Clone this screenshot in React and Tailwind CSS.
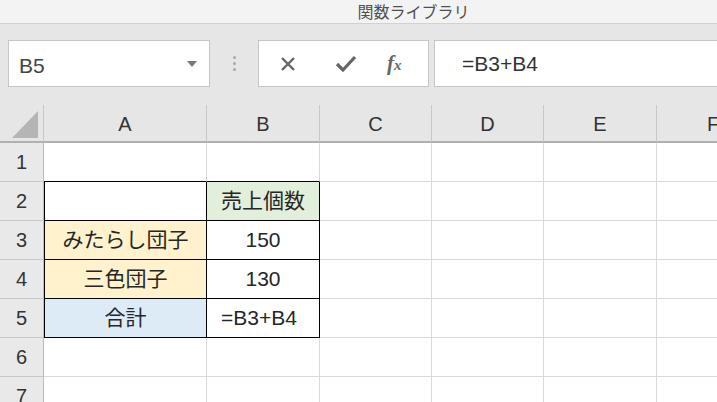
import React from 'react';

const cols = ['A', 'B', 'C', 'D', 'E', 'F'];
const rows = [1, 2, 3, 4, 5, 6, 7];

// セルの内容と装飾 (A2:B5 が表)
const cells = {
    'A2': { table: true },
    'B2': { text: '売上個数', bg: 'bg-[#e2efda]', table: true },
    'A3': { text: 'みたらし団子', bg: 'bg-[#fff2cc]', table: true },
    'B3': { text: '150', table: true },
    'A4': { text: '三色団子', bg: 'bg-[#fff2cc]', table: true },
    'B4': { text: '130', table: true },
    'A5': { text: '合計', bg: 'bg-[#ddebf7]', table: true },
    'B5': { text: '=B3+B4', table: true, left: true },
};

function Cell({ col, row }) {
    const key = `${col}${row}`;
    const c = cells[key] || {};
    // 表の上の行は下線を黒にする
    const aboveTable = row === 1 && (col === 'A' || col === 'B');
    const border = c.table
        ? 'border-r border-b border-black'
        : aboveTable
            ? 'border-r border-b border-r-[#dadada] border-b-black'
            : 'border-r border-b border-[#dadada]';
    const leftEdge = c.table && col === 'A' ? 'border-l border-l-black' : '';
    return (
        <div className={`flex items-center ${c.left ? 'justify-start pl-[14px]' : 'justify-center'} ${c.bg || 'bg-white'} ${border} ${leftEdge} text-[21px] text-[#262626] whitespace-nowrap overflow-hidden`}>
            {c.text}
        </div>
    );
}

export default function App() {
    return (
        <div className="w-[717px] h-[402px] overflow-hidden bg-[#e6e6e6] font-['Liberation_Sans','Noto_Sans_CJK_JP',sans-serif]">
            {/* リボン下部 */}
            <div className="h-[24px] bg-[#f3f3f3] border-b border-[#d2d2d2] flex justify-center items-start">
                <span className="ml-[110px] mt-[1px] text-[16px] leading-[20px] text-[#505050] font-['Noto_Sans_CJK_JP',sans-serif]">関数ライブラリ</span>
            </div>

            {/* 数式バー */}
            <div className="h-[81px] flex items-start pt-[16px] pl-[8px]">
                <div className="w-[202px] h-[47px] bg-white border border-[#c6c6c6] flex items-center justify-between pl-[10px] pr-[12px]">
                    <span className="text-[21px] text-[#444] mt-[4px]">B5</span>
                    <svg width="10" height="6" viewBox="0 0 10 6"><path d="M0 0h10L5 6z" fill="#777" /></svg>
                </div>
                <div className="w-[48px] h-[47px] flex flex-col items-center justify-center gap-[3px]">
                    <span className="w-[3px] h-[3px] rounded-full bg-[#a8a8a8]" />
                    <span className="w-[3px] h-[3px] rounded-full bg-[#a8a8a8]" />
                    <span className="w-[3px] h-[3px] rounded-full bg-[#a8a8a8]" />
                </div>
                <div className="w-[171px] h-[47px] bg-white border border-[#c6c6c6] flex items-center pl-[21px]">
                    <svg width="16" height="16" viewBox="0 0 16 16">
                        <path d="M2 2l12 12M14 2L2 14" stroke="#666" strokeWidth="2.4" />
                    </svg>
                    <svg className="ml-[39px]" width="22" height="18" viewBox="0 0 22 18">
                        <path d="M2 9l6 6L20 2" stroke="#666" strokeWidth="3.2" fill="none" strokeLinejoin="round" />
                    </svg>
                    <span className="ml-[30px] text-[21px] italic font-bold text-[#666] font-['Liberation_Serif',serif] leading-none">
                        f<span className="text-[15px]">x</span>
                    </span>
                </div>
                <div className="ml-[5px] flex-1 h-[47px] bg-white border border-[#c6c6c6] border-r-0 flex items-center pl-[27px]">
                    <span className="text-[21px] text-[#333]">=B3+B4</span>
                </div>
            </div>

            {/* シート */}
            <div className="grid grid-cols-[44px_163px_113px_112px_112px_113px_113px] grid-rows-[38px_39px_39px_39px_39px_39px_39px_39px]">
                <div className="bg-[#e6e6e6] border-r border-b-2 border-r-[#c8c8c8] border-b-[#b0b0b0] flex items-end justify-end pr-[5px] pb-[3px]">
                    <svg width="26" height="27" viewBox="0 0 26 27"><path d="M26 0v27H0z" fill="#b5b5b5" /></svg>
                </div>
                {cols.map(c => (
                    <div key={c} className="bg-[#e6e6e6] border-r border-b-2 border-r-[#c8c8c8] border-b-[#b0b0b0] flex items-center justify-center text-[20px] text-[#333] pt-[2px]">
                        {c}
                    </div>
                ))}
                {rows.map(r => (
                    <React.Fragment key={r}>
                        <div className="bg-[#e9e9e9] border-r border-b border-r-[#bcbcbc] border-b-[#c8c8c8] flex items-center justify-center text-[20px] text-[#333]">
                            {r}
                        </div>
                        {cols.map(c => <Cell key={c} col={c} row={r} />)}
                    </React.Fragment>
                ))}
            </div>
        </div>
    );
}
